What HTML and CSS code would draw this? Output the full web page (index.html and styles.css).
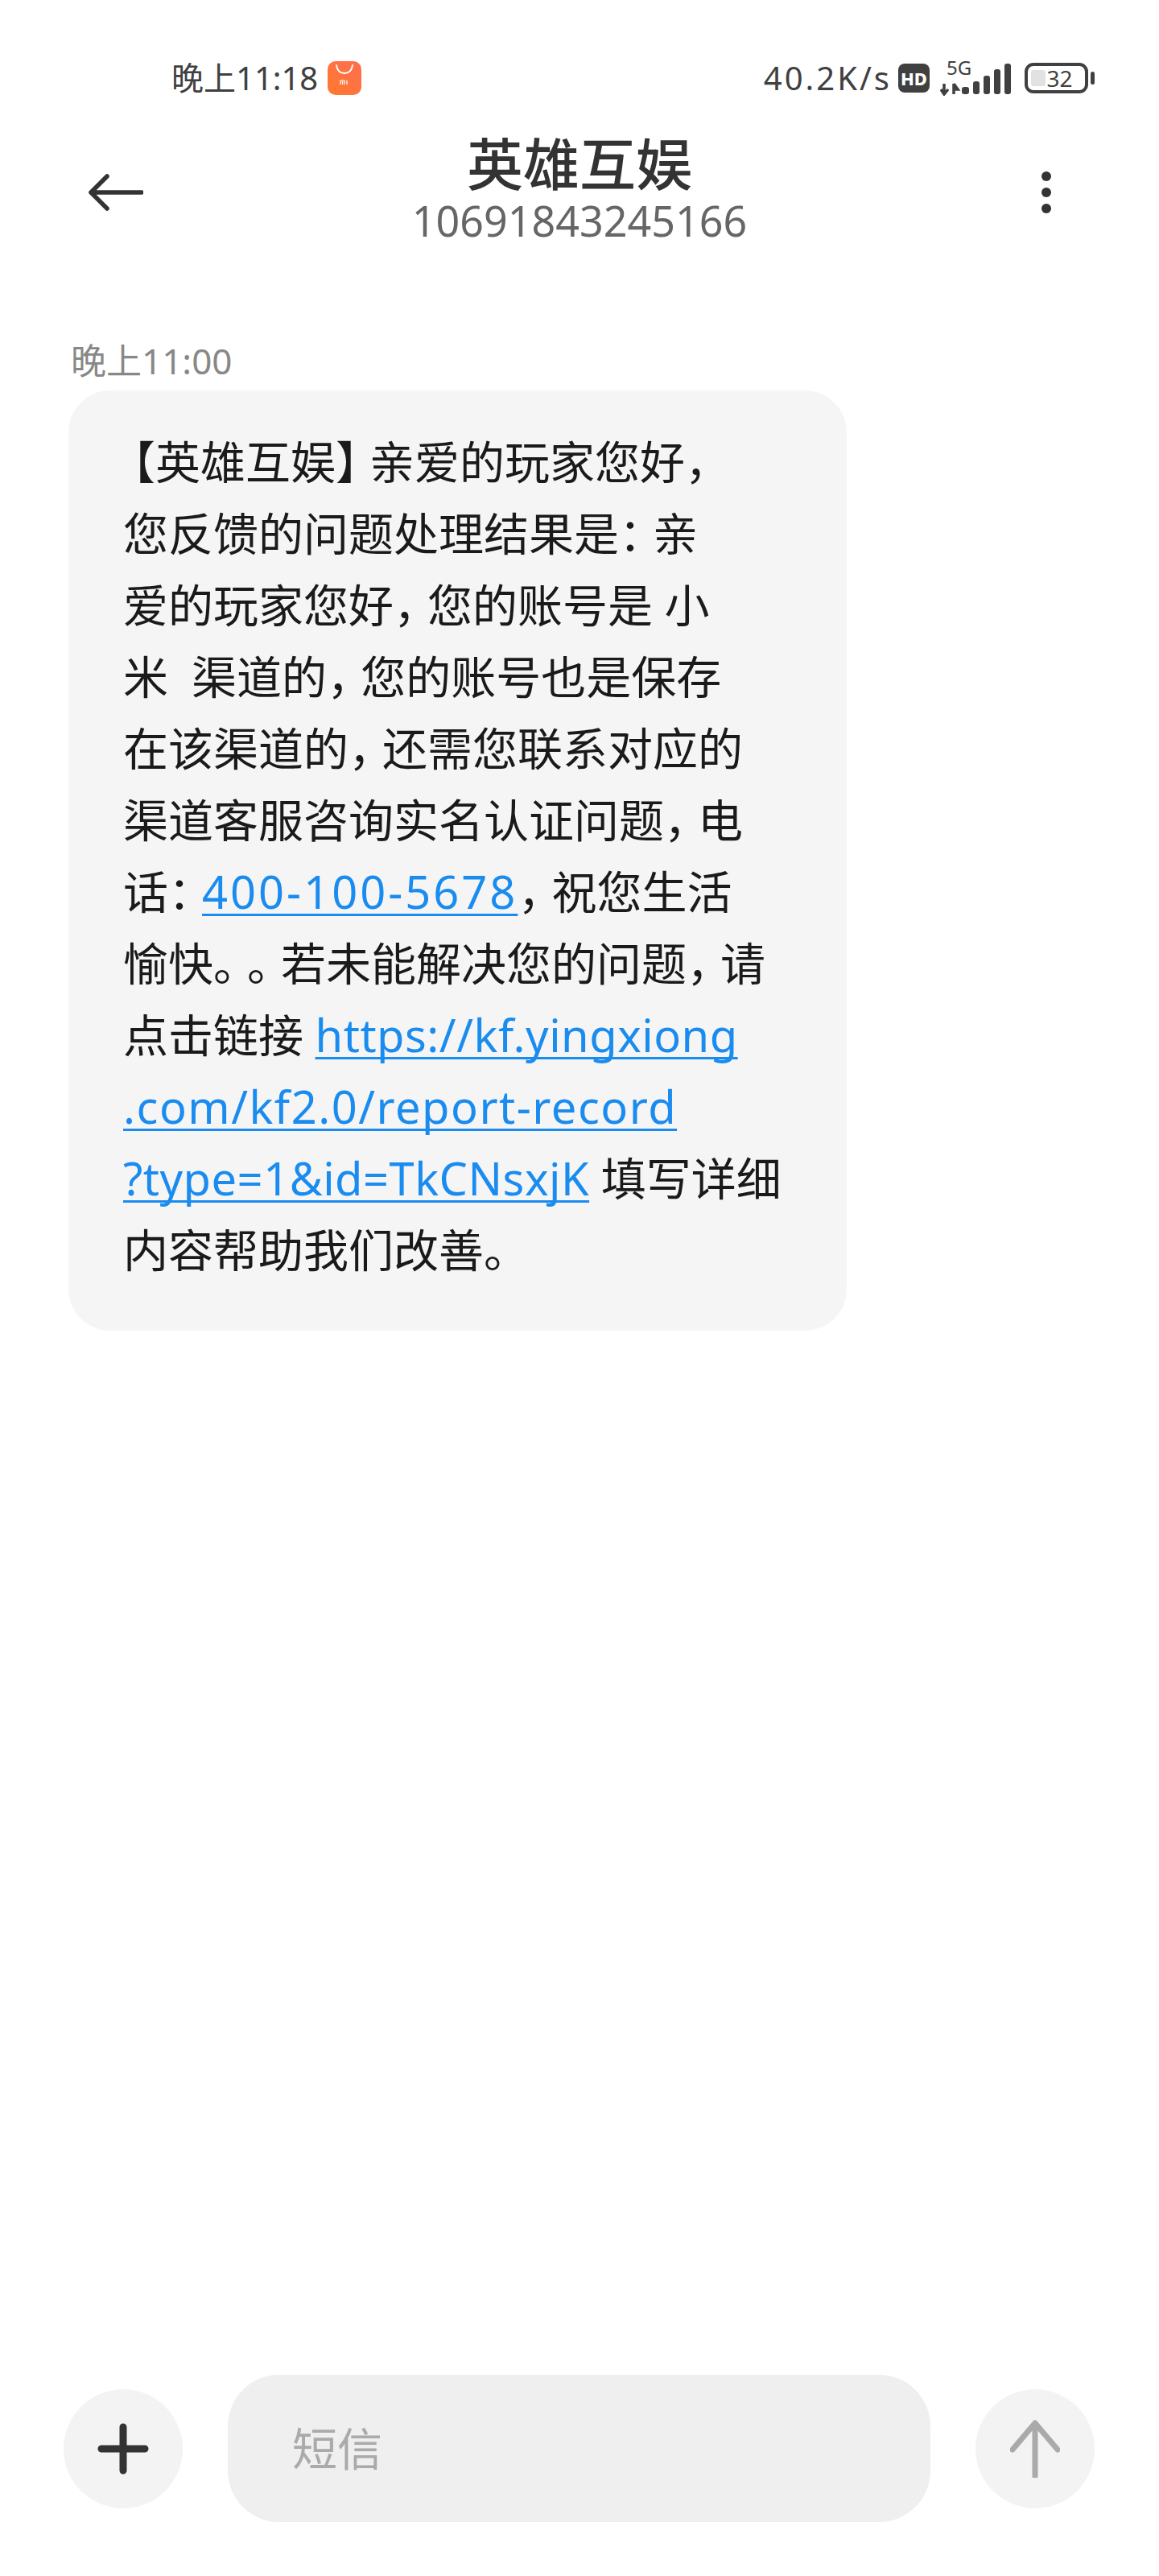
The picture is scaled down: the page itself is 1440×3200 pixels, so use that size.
FILE: index.html
```html
<!DOCTYPE html>
<html>
<head>
  <title>英雄互娱</title>
  <link rel="stylesheet" href="styles.css">
</head>

<body>
  <div class="screen">
    <div class="status-bar">
      <div class="status-left">
        <span class="clock">晚上11:18</span>
        <svg class="shop-icon" width="42" height="42" viewBox="0 0 42 42">
          <defs>
            <linearGradient id="shop-fill" x1="0" y1="1" x2="1" y2="0">
              <stop offset="0" stop-color="#ff7a2e"/>
              <stop offset="1" stop-color="#ff6d50"/>
            </linearGradient>
          </defs>
          <rect width="42" height="42" rx="10" fill="url(#shop-fill)"/>
          <path d="M11 5c1 7 5 10 10 10s9-3 10-10" fill="none" stroke="#fff" stroke-width="1.8" stroke-linecap="round"/>
          <path d="M16 29v-5h5v5M18.500 25v4M24 24v5" fill="none" stroke="#fff" stroke-width="1.2"/>
        </svg>
      </div>
      <div class="status-right">
        <span class="speed">40.2K/s</span>
        <span class="hd-badge">HD</span>
        <svg class="signal" width="90" height="56" viewBox="0 -12 90 56">
          <text class="signal-label" x="8" y="18">5G</text>
          <path d="M5 29v13M10 36l-5 6-4-6M17 42V29M17 29l5 7h-5" fill="none" stroke="#404040" stroke-width="3.500"/>
          <rect x="27" y="33" width="9" height="9" rx="3" fill="#404040"/>
          <rect x="41" y="26" width="8" height="16" rx="3" fill="#404040"/>
          <rect x="54" y="19" width="8" height="23" rx="3" fill="#404040"/>
          <rect x="67" y="11" width="8" height="31" rx="3" fill="#404040"/>
          <rect x="80" y="4" width="8" height="38" rx="3" fill="#404040"/>
        </svg>
        <div class="battery">
          <span class="battery-level"></span>
          <span class="battery-text">32</span>
        </div>
        <span class="battery-tip"></span>
      </div>
    </div>

    <div class="header">
      <svg class="back-icon" width="68" height="46" viewBox="0 0 68 46">
        <path d="M66 23H3M23 3L3 23l20 20" fill="none" stroke="#333" stroke-width="5.500" stroke-linecap="round" stroke-linejoin="round"/>
      </svg>
      <div class="contact">
        <div class="contact-name">英雄互娱</div>
        <div class="contact-number">10691843245166</div>
      </div>
      <div class="more-icon">
        <span></span>
        <span></span>
        <span></span>
      </div>
    </div>

    <div class="thread">
      <div class="msg-time">晚上11:00</div>
      <div class="bubble">
        <p class="msg-text"><span class="open">【</span>英雄互娱<span class="p">】</span>亲爱的玩家您好<span class="p">，</span><br>您反馈的问题处理结果是<span class="p">：</span>亲<br>爱的玩家您好<span class="p">，</span>您的账号是 小<br>米&nbsp; 渠道的<span class="p">，</span>您的账号也是保存<br>在该渠道的<span class="p">，</span>还需您联系对应的<br>渠道客服咨询实名认证问题<span class="p">，</span>电<br>话<span class="p">：</span><a class="phone" href="#">400-100-5678</a><span class="p">，</span>祝您生活<br>愉快<span class="p">。</span><span class="p">。</span>若未能解决您的问题<span class="p">，</span>请<br>点击链接 <a class="url" href="#">https://kf.yingxiong<br><span class="path">.com/kf2.0/report-record</span><br>?type=1&amp;id=TkCNsxjK</a> 填写详细<br>内容帮助我们改善<span class="p">。</span></p>
      </div>
    </div>

    <div class="composer">
      <button class="round-btn">
        <svg width="64" height="64" viewBox="0 0 64 64">
          <path d="M32 5v54M5 32h54" fill="none" stroke="#333" stroke-width="9" stroke-linecap="round"/>
        </svg>
      </button>
      <div class="input-box">短信</div>
      <button class="round-btn">
        <svg width="62" height="72" viewBox="0 0 62 72">
          <path d="M31 4v66M3 37L31 4l28 33" fill="none" stroke="#aaa" stroke-width="7" stroke-linecap="round" stroke-linejoin="round"/>
        </svg>
      </button>
    </div>
  </div>
</body>
</html>
```

FILE: styles.css
```css
* {
  box-sizing: border-box;
}

body {
  margin: 0;
  background: #fff;
  font-family: "Noto Sans", "Noto Sans CJK SC", sans-serif;
}

.screen {
  display: flex;
  flex-direction: column;
  height: 3200px;
}

/* status bar */
.status-bar {
  display: flex;
  justify-content: space-between;
  align-items: center;
  height: 44px;
  margin-top: 75px;
  padding: 0 80px 0 213px;
  color: #404040;
}

.status-left {
  display: flex;
  align-items: center;
  gap: 12px;
}

.clock {
  font-size: 40px;
  line-height: 44px;
}

.status-right {
  display: flex;
  align-items: center;
  height: 44px;
}

.speed {
  font-size: 40px;
  line-height: 44px;
  letter-spacing: 3px;
  margin-right: 8px;
}

.hd-badge {
  width: 39px;
  height: 36px;
  margin-right: 13px;
  border-radius: 8px;
  background: #404040;
  color: #fff;
  font-size: 22px;
  font-weight: 800;
  line-height: 36px;
  text-align: center;
}

.signal {
  align-self: flex-end;
  margin-right: 15px;
}

.signal-label {
  font-size: 24px;
  fill: #404040;
}

.battery {
  position: relative;
  display: flex;
  justify-content: center;
  align-items: center;
  width: 79px;
  height: 38px;
  padding-left: 8px;
  border: 4px solid #404040;
  border-radius: 11px;
}

.battery-level {
  position: absolute;
  left: 4px;
  top: 5px;
  width: 18px;
  height: 20px;
  border-radius: 3px;
  background: #e2e2e2;
}

.battery-text {
  position: relative;
  font-size: 28px;
  line-height: 30px;
}

.battery-tip {
  width: 5px;
  height: 16px;
  margin-left: 3px;
  border-radius: 3px;
  background: #404040;
}

/* header */
.header {
  display: grid;
  grid-template-columns: 1fr auto 1fr;
  align-items: center;
  height: 138px;
  margin-top: 51px;
  padding: 0 110px;
}

.contact {
  margin-top: -6px;
  text-align: center;
}

.contact-name {
  font-size: 70px;
  font-weight: 500;
  line-height: 76px;
  color: #333;
}

.contact-number {
  font-size: 52px;
  line-height: 64px;
  color: #666;
}

.more-icon {
  display: flex;
  flex-direction: column;
  gap: 8px;
  justify-self: end;
  margin-right: 24px;
}

.more-icon span {
  width: 12px;
  height: 12px;
  border-radius: 50%;
  background: #333;
}

/* messages */
.thread {
  flex: 1;
  padding: 0 0 0 85px;
}

.msg-time {
  margin: 115px 0 12px 3px;
  font-size: 44px;
  line-height: 50px;
  color: #888;
}

.bubble {
  width: 967px;
  padding: 44px 0 56px 68px;
  border-radius: 52px;
  background: #f5f5f5;
}

.msg-text {
  margin: 0;
  font-size: 56px;
  line-height: 89px;
  white-space: nowrap;
  color: #1a1a1a;
  font-feature-settings: "halt";
}

/* the phone shows cjk punctuation a bit wider than half width */
.msg-text .p {
  letter-spacing: 14px;
}

.msg-text .open {
  padding-left: 12px;
}

.msg-text a {
  color: #1a8cf0;
  text-decoration: underline;
  text-decoration-thickness: 3px;
  text-decoration-skip-ink: none;
  text-underline-offset: 6px;
}

.msg-text .phone {
  letter-spacing: 3px;
}

.msg-text .url {
  letter-spacing: 0.500px;
}

.msg-text .path {
  letter-spacing: 1.500px;
}

/* composer */
.composer {
  display: flex;
  align-items: center;
  gap: 56px;
  height: 183px;
  margin-bottom: 67px;
  padding: 0 80px 0 79px;
}

.round-btn {
  display: flex;
  flex: none;
  justify-content: center;
  align-items: center;
  width: 148px;
  height: 148px;
  padding: 0;
  border: none;
  border-radius: 50%;
  background: #f3f3f3;
}

.input-box {
  flex: 1;
  height: 183px;
  padding-left: 80px;
  border-radius: 64px;
  background: #efefef;
  font-size: 56px;
  line-height: 183px;
  color: #aaa;
}
```
